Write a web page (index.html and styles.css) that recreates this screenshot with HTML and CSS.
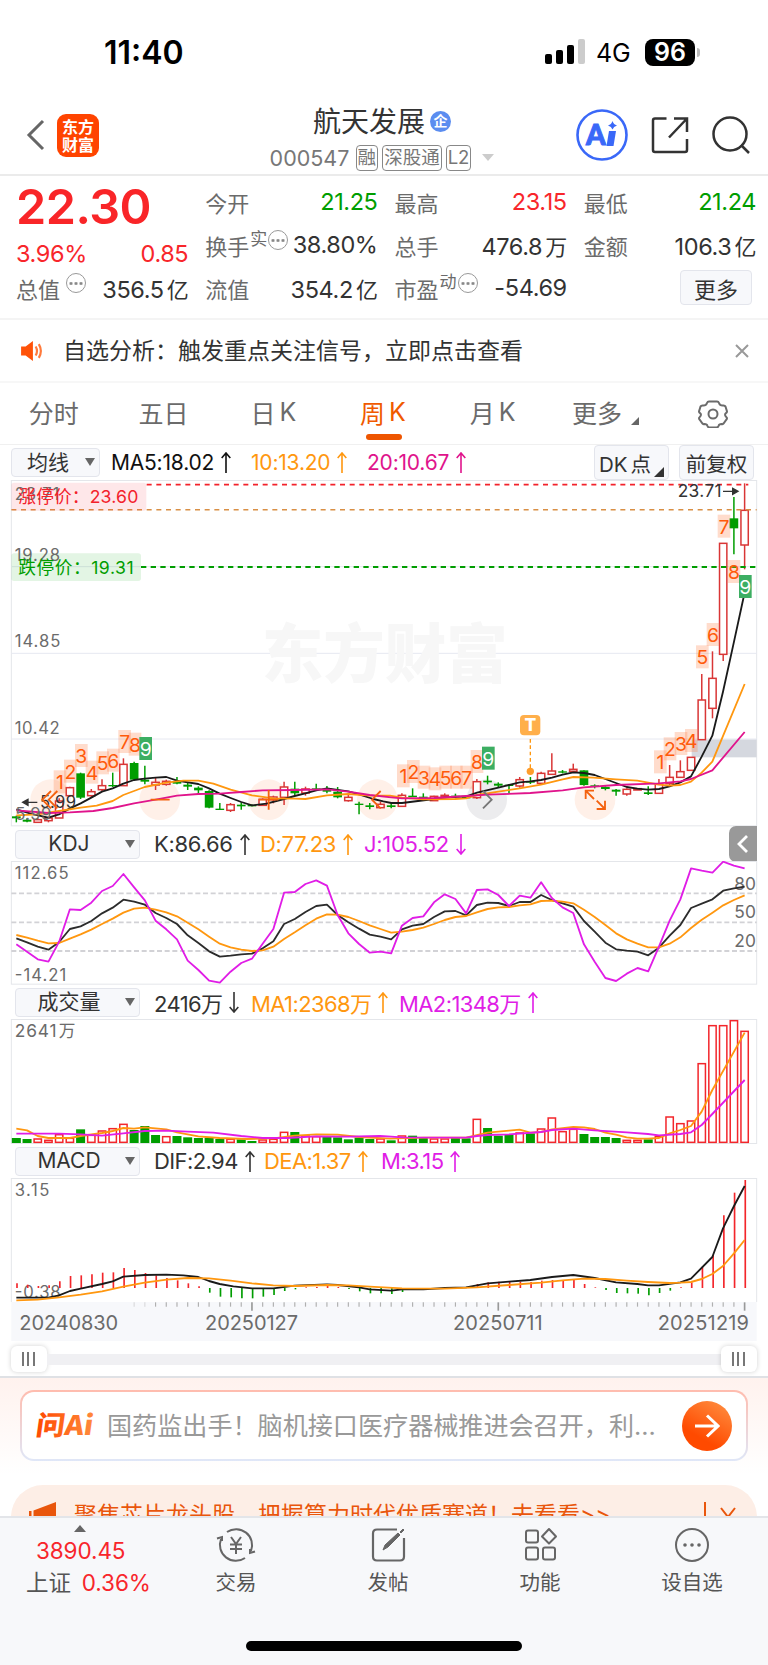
FILE: index.html
```html
<!DOCTYPE html>
<html lang="zh-CN">
<head>
  <meta charset="UTF-8">
  <title>航天发展 000547</title>
  <meta name="viewport" content="width=device-width, initial-scale=1">
  <link rel="stylesheet" href="styles.css">
</head>
<body>

<div class="status">
  <span class="time">11:40</span>
  <svg class="signal" width="40" height="26" viewBox="0 0 40 26">
    <rect x="0" y="15" width="7" height="10" rx="2"/>
    <rect x="11" y="11" width="7" height="14" rx="2"/>
    <rect x="22" y="6" width="7" height="19" rx="2"/>
    <rect x="33" y="0" width="7" height="25" rx="2" fill="#ccc"/>
  </svg>
  <span class="net">4G</span>
  <span class="battery">96</span>
  <span class="battery-tip"></span>
</div>

<header class="header">
  <div class="left">
    <svg width="19" height="32" viewBox="0 0 19 32"><path d="M17 2L3 16l14 14" fill="none" stroke="#666" stroke-width="3"/></svg>
    <div class="logo"><span>东方</span><span>财富</span></div>
  </div>
  <div class="center">
    <div class="title">航天发展<span class="qi">企</span></div>
    <div class="code"><span class="num">000547</span><b>融</b><b>深股通</b><b>L2</b><i class="caret"></i></div>
  </div>
  <div class="right">
    <svg width="52" height="52" viewBox="0 0 52 52">
      <circle cx="26" cy="26" r="24.5" fill="#fff" stroke="#3a68f8" stroke-width="2.6"/>
      <text x="10" y="36" class="ai-a">A</text>
      <path d="M33 22h7l-2.500 15h-7z" fill="#3a68f8"/>
      <path d="M36.500 12q1 3.500 4.500 4.500-3.500 1-4.500 4-1-3-4.500-4 3.500-1 4.500-4.500z" fill="#3a68f8"/>
    </svg>
    <svg width="38" height="38" viewBox="0 0 38 38" fill="none" stroke="#333" stroke-width="2.500">
      <path d="M15.500 2.500H4Q2 2.500 2 4.500V34q0 2 2 2h30q2 0 2-2V23M23 2.500h13V16M36 2.500L18 21.500"/>
    </svg>
    <svg width="38" height="38" viewBox="0 0 38 38" fill="none" stroke="#333" stroke-width="2.500">
      <circle cx="18" cy="18" r="16.500"/><path d="M29 29l8 8"/>
    </svg>
  </div>
</header>

<section class="quote">
  <div class="col first">
    <div class="price">22.30</div>
    <div class="row chg red"><span>3.96%</span><span>0.85</span></div>
    <div class="row"><label>总值<i class="more-dot"></i></label><span>356.5<em>亿</em></span></div>
  </div>
  <div class="col">
    <div class="row"><label>今开</label><span class="green">21.25</span></div>
    <div class="row"><label>换手<sup>实</sup><i class="more-dot tight"></i></label><span>38.80%</span></div>
    <div class="row"><label>流值</label><span>354.2<em>亿</em></span></div>
  </div>
  <div class="col">
    <div class="row"><label>最高</label><span class="red">23.15</span></div>
    <div class="row"><label>总手</label><span>476.8<em>万</em></span></div>
    <div class="row"><label>市盈<sup>动</sup><i class="more-dot tight"></i></label><span>-54.69</span></div>
  </div>
  <div class="col">
    <div class="row"><label>最低</label><span class="green">21.24</span></div>
    <div class="row"><label>金额</label><span>106.3<em>亿</em></span></div>
    <div class="row"><button class="more-btn">更多</button></div>
  </div>
</section>

<div class="notice">
  <svg width="24" height="20" viewBox="0 0 24 22">
    <path d="M0 6h5l8-6v22l-8-6H0z" fill="#ff5208"/>
    <path d="M16 6q3 5 0 10M19.500 3.500q4.500 7.500 0 15" fill="none" stroke="#ff7a3c" stroke-width="2.400"/>
  </svg>
  <span>自选分析：触发重点关注信号，立即点击查看</span>
  <svg class="x" width="14" height="14" viewBox="0 0 14 14"><path d="M1 1l12 12M13 1L1 13" stroke="#999" stroke-width="2"/></svg>
</div>

<nav class="tabs">
  <span>分时</span>
  <span>五日</span>
  <span>日<u>K</u></span>
  <span class="on">周<u>K</u></span>
  <span>月<u>K</u></span>
  <span>更多<i class="corner"></i></span>
  <span class="gear"><svg width="30" height="28" viewBox="-15 -14 30 28" fill="none" stroke="#6b6b6b" stroke-width="2">
    <path d="M-4-12.500h8q1.500 0 2 1.500 1 3 4.500 2.500 1.500 0 2 1l1.500 5q0 1-1 1.500-1.500 1-.500 3l1.500 2q0 1-.500 1.500l-3 4q-1 1-2 .5-2.500 0-3 2-.500 1.500-2 1.500h-7q-1.500 0-2-1.500-.500-2-3-2-1 .5-2-.500l-3-4q-.500-.500-.500-1.500l1.500-2q1-2-.500-3-1-.500-1-1.500l1.500-5q.5-1 2-1 3.500.5 4.500-2.500.5-1.500 2-1.500z"/>
    <circle r="4.500"/></svg></span>
</nav>

<div class="ma-row">
  <div class="select small">均线<i></i></div>
  <span class="lg" style="width:140px">MA5:18.02<svg class="arr"><use href="#up"/></svg></span>
  <span class="lg orange" style="width:116px">10:13.20<svg class="arr"><use href="#up"/></svg></span>
  <span class="lg pink">20:10.67<svg class="arr"><use href="#up"/></svg></span>
  <div class="btns"><button class="dk">DK<em>点</em><i class="corner"></i></button><button>前复权</button></div>
</div>
<svg id="kline" class="chart" viewBox="0 15 2304 1041" height="347"></svg>

<div class="sub-row">
  <div class="select">KDJ<i></i></div>
  <span class="lg" style="width:106px">K:86.66<svg class="arr"><use href="#up"/></svg></span>
  <span class="lg orange" style="width:104px">D:77.23<svg class="arr"><use href="#up"/></svg></span>
  <span class="lg purple">J:105.52<svg class="arr"><use href="#down"/></svg></span>
  <div class="fold"><svg width="12" height="18" viewBox="0 0 12 18"><path d="M10 1L2 9l8 8" fill="none" stroke="#fff" stroke-width="2.800"/></svg></div>
</div>
<svg id="kdj" class="chart" viewBox="0 123 2304 372" height="124"></svg>

<div class="sub-row">
  <div class="select">成交量<i></i></div>
  <span class="lg tight" style="width:97px">2416万<svg class="arr"><use href="#down"/></svg></span>
  <span class="lg tight orange" style="width:148px">MA1:2368万<svg class="arr"><use href="#up"/></svg></span>
  <span class="lg tight purple">MA2:1348万<svg class="arr"><use href="#up"/></svg></span>
</div>
<svg id="vol" class="chart" viewBox="0 27 2304 375" height="125"></svg>

<div class="sub-row">
  <div class="select">MACD<i></i></div>
  <span class="lg tight" style="width:110px">DIF:2.94<svg class="arr"><use href="#up"/></svg></span>
  <span class="lg tight orange" style="width:117px">DEA:1.37<svg class="arr"><use href="#up"/></svg></span>
  <span class="lg tight purple">M:3.15<svg class="arr"><use href="#up"/></svg></span>
</div>
<svg id="macd" class="chart" viewBox="0 504 2304 492" height="164"></svg>

<div class="slider">
  <div class="handle"><i></i><i></i><i></i></div>
  <div class="track"></div>
  <div class="handle"><i></i><i></i><i></i></div>
</div>

<section class="feed">
  <div class="ask">
    <svg class="ask-svg" width="60" height="40" viewBox="0 0 60 40">
      <defs><linearGradient id="g1"><stop offset="0" stop-color="#ff4a00"/><stop offset="1" stop-color="#ff8a3c"/></linearGradient></defs>
      <text x="5" y="29" class="ask-logo" textLength="57" lengthAdjust="spacingAndGlyphs" transform="skewX(-8)" fill="url(#g1)">问Ai</text>
    </svg>
    <span class="q">国药监出手！脑机接口医疗器械推进会召开，利...</span>
    <span class="go"><svg width="26" height="24" viewBox="0 0 26 24"><path d="M1 12h22M13 1.500L24 12 13 22.500" fill="none" stroke="#fff" stroke-width="3"/></svg></span>
  </div>
  <div class="promo">
    <svg width="28" height="30" viewBox="0 0 28 30"><path d="M0 9h2.500v21H0zM4.500 8.500L27 0v30H4.500z" fill="#e9560c"/></svg>
    <span>聚焦芯片龙头股，把握算力时代优质赛道！去看看&gt;&gt;</span>
    <i class="bar"></i>
    <svg class="x" width="16" height="20" viewBox="0 0 16 20"><path d="M1 1l14 18M15 1L1 19" stroke="#e9560c" stroke-width="2"/></svg>
  </div>
</section>

<footer class="bottom">
  <div class="index">
    <i class="tri"></i>
    <div class="red">3890.45</div>
    <div class="name">上证<span class="red">0.36%</span></div>
  </div>
  <div class="item">
    <svg width="40" height="36" viewBox="-20 -18 40 36" fill="none" stroke="#666" stroke-width="2">
      <path d="M-9-13A16 16 0 0 1 15 6M9 13A16 16 0 0 1-15-6M19 6.500l-5 1.500 0-4M-19-6.500l5-1.500 0 4"/>
      <path d="M-5-8L0-1l5-7M0-1V9M-6-.500H6M-6 4H6"/>
    </svg>交易
  </div>
  <div class="item">
    <svg width="40" height="36" viewBox="-20 -18 40 36" fill="none" stroke="#666" stroke-width="2.200">
      <path d="M9-15.500h-20q-4 0-4 4v23q0 4 4 4h23q4 0 4-4V-7"/>
      <path d="M-5 5L-3 0 10-12l2 2L0 2zM12-13l3-3 1 1-3 3z" fill="#666" stroke-width="1"/>
    </svg>发帖
  </div>
  <div class="item">
    <svg width="40" height="36" viewBox="-20 -18 40 36" fill="none" stroke="#666" stroke-width="2">
      <rect x="-14" y="-14.500" width="12" height="12" rx="2"/><rect x="-14" y="2.500" width="12" height="12" rx="2"/><rect x="3" y="2.500" width="12" height="12" rx="2"/>
      <path d="M9-16l7 7.500-7 7-7-7z" stroke-linejoin="round"/>
    </svg>功能
  </div>
  <div class="item">
    <svg width="40" height="36" viewBox="-20 -18 40 36" fill="none" stroke="#666" stroke-width="2">
      <circle r="16"/><g fill="#666" stroke="none"><circle cx="-7" r="1.800"/><circle r="1.800"/><circle cx="7" r="1.800"/></g>
    </svg>设自选
  </div>
  <div class="home"></div>
</footer>

<svg width="0" height="0" class="defs">
  <symbol id="up" viewBox="0 0 10 21"><path d="M5 21V1M.700 6L5 1l4.300 5" fill="none" stroke="currentColor" stroke-width="1.600"/></symbol>
  <symbol id="down" viewBox="0 0 10 21"><path d="M5 0v20M.700 15L5 20l4.300-5" fill="none" stroke="currentColor" stroke-width="1.600"/></symbol>
</svg>

<script src="charts.js"></script>
</body>
</html>
```
FILE: styles.css
```css
* {
  box-sizing: border-box;
}
body {
  margin: 0;
  width: 768px;
  height: 1665px;
  overflow: hidden;
  background: #fff;
  color: #333;
  font-family: Inter, "Noto Sans CJK SC", sans-serif;
  display: flex;
  flex-direction: column;
}
i, em {
  font-style: normal;
}
button {
  font-family: inherit;
  color: #333;
  background: #f7f8fb;
  border: 1.5px solid #e3e5ec;
  border-radius: 4px;
  padding: 0;
}
.red { color: #f8262b; }
.green { color: #009d00; }
.orange { color: #ff970f; }
.pink { color: #e0148c; }
.purple { color: #e01de6; }
.defs { display: none; }

/* status bar */
.status {
  height: 84px;
  flex: none;
  display: flex;
  align-items: center;
  padding: 20px 67px 0 104px;
  color: #000;
}
.time {
  font-size: 32px;
  font-weight: 600;
  width: 441px;
}
.net {
  font-size: 25px;
  margin-left: 11px;
  width: 49px;
  letter-spacing: -0.2px;
  padding-top: 2px;
}
.battery {
  width: 50px;
  height: 27px;
  border-radius: 8px;
  background: #000;
  color: #fff;
  font-size: 25px;
  font-weight: 600;
  line-height: 27px;
  text-align: center;
}
.battery-tip {
  width: 3px;
  height: 9px;
  margin-left: 2px;
  border-radius: 0 4px 4px 0;
  background: #bbb;
}

/* header */
.header {
  height: 92px;
  flex: none;
  display: grid;
  grid-template-columns: 192px 1fr 192px;
  align-items: center;
  border-bottom: 2px solid #ebebeb;
}
.left {
  display: flex;
  align-items: center;
  gap: 12px;
  padding: 12px 0 0 26px;
}
.logo {
  width: 42px;
  height: 43px;
  border-radius: 9px;
  background: #ff4400;
  color: #fff;
  font: 700 16px/18px "Noto Sans CJK SC", sans-serif;
  text-align: center;
  padding-top: 3px;
}
.logo span { display: block; }
.center {
  text-align: center;
  padding: 13px 4px 0 0;
}
.title {
  font-size: 28px;
  line-height: 36px;
  display: flex;
  justify-content: center;
  align-items: center;
  gap: 5px;
  margin-top: 3px;
}
.qi {
  width: 21px;
  height: 21px;
  border-radius: 50%;
  background: #5b8df0;
  color: #fff;
  font-size: 14px;
  font-weight: 700;
  line-height: 20px;
}
.code {
  display: flex;
  justify-content: center;
  align-items: center;
  font-size: 21.5px;
  color: #777;
  gap: 4px;
  margin-top: 5px;
}
.code .num {
  width: 82px;
  text-align: left;
}
.code b {
  font-weight: 400;
  font-size: 18.5px;
  line-height: 23px;
  height: 26px;
  border: 1.5px solid #888;
  border-radius: 4px;
  padding: 0 1px;
}
.caret {
  border: 6px solid transparent;
  border-top: 7px solid #ccc;
  border-bottom: 0;
  margin-left: 7px;
}
.right {
  display: flex;
  justify-content: flex-end;
  align-items: center;
  gap: 23px;
  padding: 11px 18px 0 0;
}
.ai-a {
  font: 900 28px "Lato", sans-serif;
  fill: #3a68f8;
  stroke: #3a68f8;
  stroke-width: 1;
}

/* quote */
.quote {
  height: 144px;
  flex: none;
  display: grid;
  grid-template-columns: repeat(4, 1fr);
  gap: 17px;
  padding: 4px 12px 0 16px;
  border-bottom: 2px solid #f4f4f4;
}
.row {
  height: 43px;
  display: flex;
  align-items: center;
  justify-content: space-between;
  font-size: 23.5px;
  letter-spacing: -0.4px;
  white-space: nowrap;
}
.row em {
  margin-left: 3px;
  font-size: 22px;
}
.row label {
  color: #6b6b6b;
  font-size: 22px;
  letter-spacing: 0;
  display: flex;
  align-items: center;
}
.price {
  font-size: 48.5px;
  font-weight: 600;
  letter-spacing: -0.5px;
  line-height: 50px;
  height: 46px;
  margin-top: 2px;
  color: #f92528;
}
.chg {
  height: 38px;
  padding-top: 12px;
}
sup {
  font-size: 17px;
  line-height: 20px;
  align-self: flex-start;
  margin-left: 1px;
}
.more-dot {
  width: 20px;
  height: 20px;
  margin: -9px 0 0 6px;
  border: 1.5px solid #999;
  border-radius: 50%;
  background: radial-gradient(circle, #888 1.3px, transparent 1.6px) center / 5px 17px repeat-x content-box;
  padding: 0 1px;
}
.more-dot.tight { margin-left: 1px; }
.more-btn {
  width: 72px;
  height: 35px;
  margin: 0 4px 0 auto;
  font-size: 22px;
}

/* notice */
.notice {
  height: 63px;
  flex: none;
  display: flex;
  align-items: center;
  padding: 0 19px 0 20px;
  font-size: 23px;
  border-bottom: 2px solid #f7f7f7;
}
.notice span {
  margin-left: 19px;
  padding-bottom: 3px;
}
.x { margin-left: auto; }

/* tabs */
.tabs {
  height: 62px;
  flex: none;
  display: grid;
  grid-template-columns: repeat(7, 1fr);
  border-bottom: 1px solid #f0f0f0;
}
.tabs span {
  position: relative;
  display: flex;
  align-items: center;
  justify-content: center;
  font-size: 25px;
  color: #6b6b6b;
  padding: 0 2px 3px 0;
}
.tabs .gear { padding: 0; }
.tabs u {
  text-decoration: none;
  margin-left: 4px;
}
.tabs .on { color: #f05a00; }
.tabs .on::after {
  content: "";
  position: absolute;
  left: 37px;
  bottom: 4px;
  width: 36px;
  height: 6px;
  border-radius: 3px;
  background: #ee5500;
}
.corner {
  border: 4px solid #666;
  border-top-color: transparent;
  border-left-color: transparent;
  margin: 18px -6px 0 9px;
}

/* indicator rows */
.ma-row, .sub-row {
  flex: none;
  display: flex;
  align-items: center;
}
.ma-row {
  height: 35px;
  padding-left: 11px;
  color: #111;
}
.sub-row {
  height: 34px;
  padding-left: 15px;
}
.select {
  position: relative;
  width: 125px;
  height: 29px;
  margin-right: 14px;
  padding-right: 17px;
  border: 1.5px solid #e3e5ec;
  border-radius: 4px;
  background: #f7f8fb;
  font-size: 21px;
  line-height: 26px;
  color: #333;
  display: flex;
  align-items: center;
  justify-content: center;
}
.select i {
  position: absolute;
  right: 4px;
  top: 9px;
  border: 5px solid transparent;
  border-top: 8px solid #666;
  border-bottom: 0;
}
.select.small {
  width: 89px;
  margin-right: 11px;
  padding-right: 15px;
}
.lg {
  flex: none;
  font-size: 22px;
  letter-spacing: -0.3px;
  white-space: nowrap;
  display: flex;
  align-items: center;
}
.lg.tight { letter-spacing: -0.6px; }
.ma-row .lg {
  font-size: 21px;
  letter-spacing: -0.2px;
}
.arr {
  width: 10px;
  height: 21px;
  margin-left: 7px;
}
.btns {
  margin-left: auto;
  margin-right: 14px;
  display: flex;
  gap: 10px;
}
.btns button {
  width: 75px;
  height: 35px;
  font-size: 20.5px;
}
.btns .dk {
  position: relative;
  text-align: left;
  padding-left: 4px;
}
.dk em { margin-left: 3px; }
.dk .corner {
  position: absolute;
  right: 4px;
  bottom: 2px;
  margin: 0;
  border-width: 5px;
  border-right-color: #333;
  border-bottom-color: #333;
}
.fold {
  margin-left: auto;
  margin-right: 11px;
  width: 28px;
  height: 36px;
  border-radius: 7px 0 0 7px;
  background: #999;
  display: flex;
  align-items: center;
  justify-content: center;
}
.chart {
  display: block;
  width: 768px;
  flex: none;
  font-family: Inter, "Noto Sans CJK SC", sans-serif;
}

/* range slider */
.slider {
  height: 34px;
  flex: none;
  display: flex;
  align-items: center;
  padding: 0 11px;
}
.track {
  flex: 1;
  height: 11px;
  background: #f0f0f3;
}
.handle {
  width: 36px;
  height: 26px;
  border-radius: 6px;
  background: #fff;
  box-shadow: 0 0 5px rgba(0,0,0,0.18);
  display: flex;
  align-items: center;
  justify-content: center;
  gap: 3.500px;
  padding-right: 2px;
}
.handle i {
  width: 2px;
  height: 14px;
  background: #777;
}

/* feed */
.feed {
  height: 140px;
  flex: none;
  overflow: hidden;
  border-top: 2px solid #dfe1e5;
  background: linear-gradient(#fff2ee, #fff 70%);
}
.ask {
  height: 71px;
  margin: 12px 20px 24px;
  border: 2px solid transparent;
  border-radius: 14px;
  background: linear-gradient(#fff, #fff) padding-box, linear-gradient(#ffbcae, #dfe7f8) border-box;
  display: flex;
  align-items: center;
  padding: 0 14px 0 12px;
}
.ask-svg { overflow: visible; }
.ask-logo {
  font: 900 27px "Noto Sans CJK SC", sans-serif;
}
.q {
  font-size: 25.100px;
  color: #999;
  margin-left: 13px;
  padding-bottom: 3px;
  white-space: nowrap;
}
.go {
  flex: none;
  width: 50px;
  height: 50px;
  margin-left: auto;
  border-radius: 50%;
  background: linear-gradient(30deg, #ff4a00 30%, #ff9345);
  display: flex;
  align-items: center;
  justify-content: center;
}
.promo {
  height: 64px;
  margin: 0 11px;
  border-radius: 32px;
  background: #fdeee6;
  color: #e9560c;
  font-size: 23px;
  display: flex;
  align-items: center;
  padding: 0 21px 0 18px;
}
.promo span {
  margin-left: 17px;
  padding-bottom: 9px;
}
.promo .bar {
  width: 2px;
  height: 30px;
  background: #e9560c;
  margin-left: auto;
}
.promo .x { margin-left: 14px; }

/* bottom bar */
.bottom {
  flex: 1;
  position: relative;
  display: flex;
  background: #f7f8fa;
  border-top: 2px solid #e3e5e9;
  color: #555;
}
.index {
  width: 160px;
  font-size: 22.500px;
  line-height: 32px;
  letter-spacing: -0.1px;
  padding: 7px 0 0 36px;
}
.index .tri {
  display: block;
  width: 0;
  margin: 0 0 3px 38px;
  border: 6px solid transparent;
  border-top: 0;
  border-bottom: 7px solid #666;
}
.index .name { margin-left: -10px; }
.index .name span { margin-left: 11px; }
.item {
  width: 152px;
  display: flex;
  flex-direction: column;
  align-items: center;
  font-size: 20.5px;
  line-height: 30px;
  padding-top: 9px;
}
.item svg { margin-bottom: 5px; }
.home {
  position: absolute;
  left: 246px;
  bottom: 14px;
  width: 276px;
  height: 10px;
  border-radius: 5px;
  background: #000;
}
```
FILE: charts.js
```js
// Charts are drawn in 3x units (2304 units = 768px wide)
const X0 = 49, STEP = 32.13, HALF = 1140;
const RED = '#d93636', GREEN = '#009d00', ORANGE = '#ff970f', PINK = '#e0148c', PURPLE = '#e01de6', BLACK = '#1a1a1a';
const cx = i => X0 + STEP * i;

const rect = (x, y, w, h, a) => `<rect x="${x}" y="${y}" width="${w}" height="${h}" ${a}/>`;
const seg = (x1, y1, x2, y2, c, w = 3, extra = '') => `<line x1="${x1}" y1="${y1}" x2="${x2}" y2="${y2}" stroke="${c}" stroke-width="${w}" ${extra}/>`;
const text = (x, y, s, size, c, len, extra = '') => `<text x="${x}" y="${y}" font-size="${size}" fill="${c}" ${len ? `textLength="${len}"` : ''} ${extra}>${s}</text>`;
const line = (pts, c) => `<polyline points="${pts}" fill="none" stroke="${c}" stroke-width="5.5" stroke-linejoin="round"/>`;
// second half of a curve is stored relative to the middle of the panel
const curve = (a, b, c) => {
  const right = b.split(' ').map(p => { const [x, y] = p.split(','); return (+x + HALF) + ',' + y; });
  return line(a + ' ' + right.join(' '), c);
};
const series = (ys, c) => line(ys.map((y, i) => cx(i) + ',' + y).join(' '), c);
const frame = (y, h) => rect(34, y, 2236, h, 'fill="none" stroke="#e4e6ea" stroke-width="3"');

// type, high, body top, body bottom, low
const candles = `d 1022 1024 1030 1042|d 1030 1034 1040 1042|u 1030 1034 1042 1044|u 1026 1029 1037 1042|u 970 978 1029 1029
u 935 938 962 965|d 893 895 968 972|u 942 950 962 968|u 913 932 944 948|d 893 930 934 936
u 850 868 932 932|d 860 864 914 916|d 872 914 920 928|u 908 922 930 945|u 914 919 928 932
d 906 918 926 928|d 922 929 935 945|d 934 938 946 960|d 946 948 998 1000|d 984 1001 1004 1004
u 984 989 1006 1011|d 982 989 994 1004|d 988 990 993 994|u 970 973 991 991|u 962 966 974 985
u 920 936 967 990|d 920 941 955 962|u 935 942 954 962|d 926 940 943 944|d 933 942 950 955
d 936 950 967 970|u 960 967 977 980|d 980 986 990 1018|d 984 991 996 1003|u 980 988 998 1000
d 985 991 996 1000|u 955 961 994 994|d 940 962 966 966|d 955 965 969 972|u 962 964 977 977
u 955 961 965 970|d 956 962 966 970|d 960 964 970 972|u 912 920 968 972|d 902 917 922 928
d 922 926 932 936|d 927 929 932 954|u 906 914 933 938|d 906 918 923 927|u 890 895 925 926
u 835 888 898 898|d 885 889 893 895|u 866 883 889 892|d 886 886 930 932|d 928 931 934 940
d 934 936 942 946|d 942 944 950 962|u 940 943 957 962|u 940 941 944 945|d 934 952 957 960
u 912 928 955 955|u 870 907 926 930|u 856 890 907 907|u 847 847 886 886|u 597 675 794 794
u 529 610 700 730|u 205 205 538 558|d 66 130 160 238|u 25 106 210 283`.split(/[|\n]/).map(s => s.split(' '));

function kline() {
  let s = frame(16.5, 1036);
  s += rect(HALF + 935, 793, 195, 54, 'fill="#d5d8df"');
  [275, 535, 792].forEach(y => s += seg(34, y, 2270, y, '#e6e8f1', 3));
  s += text(785, 605, '东方财富', 190, '#f7f7f7', 738, 'font-weight="900" lengthAdjust="spacingAndGlyphs"');

  // round tool buttons
  [152, 479, 806, 1132, 1460, 1785].forEach((x, i) => s += `<circle cx="${x}" cy="974" r="61" fill="${i == 4 ? '#ececee' : '#fff0e8'}"/>`);

  candles.forEach(([t, hi, top, bot, lo], i) => {
    const x = cx(i), h = Math.max(bot - top, 4);
    if (t == 'u') {
      s += seg(x, hi, x, top, RED, 4.5) + seg(x, bot, x, lo, RED, 4.5);
      s += rect(x - 11, top, 22, h, `fill="#fff" stroke="${RED}" stroke-width="4.5"`);
    } else {
      s += seg(x, hi, x, lo, GREEN, 4.5) + rect(x - 13, top, 26, h, `fill="${GREEN}"`);
    }
  });

  s += curve('49,1003 100,1018 145,1028 177,1018 210,1000 242,985 274,968 306,950 338,940 370,926 402,915 434,911 467,908 499,906 531,917 595,927 627,940 659,956 692,969 724,981 756,991 800,986 852,972 884,963 916,955 949,946 981,940 1045,949 1077,958 1120,972 1150,979',
    '34,984 66,984 162,972 194,968 260,964 291,953 355,938 419,922 451,919 483,915 516,908 548,899 580,892 612,894 644,900 676,912 708,924 740,936 772,941 804,944 837,942 869,934 901,922 933,904 965,845 997,782 1029,650 1062,500 1091,366', BLACK);
  s += curve('49,1021 113,1018 177,1008 242,998 290,992 338,978 370,960 434,936 499,923 550,917 595,917 640,926 692,944 756,961 820,970 884,971 916,972 981,961 1045,957 1109,962',
    '30,962 66,968 130,973 226,972 258,970 291,960 355,950 419,940 483,929 548,913 580,906 640,908 708,913 772,917 837,929 869,932 901,930 933,920 965,893 997,860 1094,627', ORANGE);
  s += curve('49,1006 145,1014 210,1012 280,1008 338,999 402,985 467,974 531,962 595,957 659,956 724,951 788,946 884,945 981,943 1045,950 1109,960',
    '34,967 66,970 162,969 258,963 323,959 451,954 548,946 612,937 708,930 837,925 901,919 933,912 997,886 1094,771', PINK);

  // limit price lines
  s += seg(440, 29, 2245, 29, '#f3222b', 5, 'stroke-dasharray="15 14"');
  s += seg(34, 104, 2270, 104, '#d98f45', 4.5, 'stroke-dasharray="15 14"');
  s += seg(423, 276, 2270, 276, GREEN, 6.5, 'stroke-dasharray="16 13"');
  s += rect(34, 23, 405, 84, 'rx="8" fill="rgba(250,60,70,0.12)"');
  s += rect(34, 235, 389, 83, 'rx="8" fill="rgba(0,160,10,0.11)"');

  s += text(44, 74, '23.71', 50, '#6b6b6b', 134);
  s += text(44, 257, '19.28', 50, '#6b6b6b', 136);
  s += text(44, 517, '14.85', 50, '#6b6b6b', 137);
  s += text(44, 776, '10.42', 50, '#6b6b6b', 135);
  s += text(55, 84, '涨停价：23.60', 53, '#f3222b', 360);
  s += text(55, 296, '跌停价：19.31', 53, GREEN, 346);
  s += text(46, 1035, '5.99', 50, '#6b6b6b', 108);
  s += text(120, 1000, '5.99', 50, '#333', 108);
  s += `<path d="M112 982H70M84 973L68 982l16 9z" fill="#333" stroke="#333" stroke-width="4"/>`;
  s += text(HALF + 893, 67, '23.71', 52, '#333', 132);
  s += `<path d="M2169 49h40M2198 40l16 9-16 9z" fill="#333" stroke="#333" stroke-width="4"/>`;

  // TD sequence numbers
  const marks = [[180, 886, 1], [211, 854, 2], [244, 807, 3], [276, 857, 4], [308, 829, 5], [340, 821, 6], [374, 765, 7], [405, 773, 8], [437, 786, 9],
    [1210, 868, 1], [1240, 855, 2], [1272, 872, 3], [1305, 877, 4], [1337, 872, 5], [1369, 872, 6], [1400, 872, 7], [1431, 825, 8], [1465, 815, 9],
    [1981, 826, 1], [2010, 787, 2], [2043, 771, 3], [2074, 762, 4], [2107, 511, 5], [2139, 444, 6], [2172, 119, 7], [2202, 255, 8], [2236, 300, 9]];
  marks.forEach(([x, y, n]) => {
    s += rect(x - 19, y, 38, 69, n == 9 ? 'fill="#3cae62"' : 'fill="rgba(255,125,65,0.27)"');
    s += text(x, y + 57, n, 58, n == 9 ? '#fff' : '#ff5a0a', 0, 'text-anchor="middle"');
  });

  // T marker
  s += rect(1560, 720, 61, 61, 'rx="12" fill="#ffaf4b"');
  s += text(1591, 768, 'T', 52, '#fff', 0, 'text-anchor="middle" font-weight="800"');
  s += seg(1591, 792, 1591, 885, ORANGE, 4, 'stroke-dasharray="11 8"');
  s += `<circle cx="1591" cy="889" r="11" fill="#ff9d2b"/>`;

  s += `<g fill="none" stroke="#f4610e" stroke-width="5.5">
    <path d="M153 948l-26 26 26 26M172 948l-26 26 26 26M452 974h57M806 945v59M777 974h58M1142 948l-26 26 26 26"/>
    <path d="M1757 972v-25h25M1757 947l25 25M1815 977v25h-25M1815 1002l-25-25"/>
    <path d="M1449 948l26 26-26 26" stroke="#777"/></g>`;
  return s;
}

function kdj() {
  let s = frame(124.5, 368);
  [220, 307, 393].forEach(y => s += seg(34, y, 2270, y, '#d2d2d6', 5.5, 'stroke-dasharray="15 8"'));
  s += text(44, 176, '112.65', 50, '#6b6b6b', 162);
  s += text(44, 482, '-14.21', 50, '#6b6b6b', 155);
  s += text(2203, 209, '80', 52, '#6b6b6b', 65) + text(2203, 294, '50', 52, '#6b6b6b', 65) + text(2203, 381, '20', 52, '#6b6b6b', 65);
  s += series([355,367,380,389,366,327,319,303,280,263,239,245,254,279,294,312,346,369,394,410,407,403,401,385,364,312,297,276,258,254,285,307,326,344,350,358,328,317,312,291,274,273,286,255,248,249,258,246,246,225,240,250,260,303,335,368,388,392,395,406,383,347,315,264,251,238,212,205,200], '#2c2c2c');
  s += series([345,353,362,370,369,356,343,329,312,296,278,266,263,269,277,289,308,328,350,371,382,389,393,391,380,357,337,316,296,283,284,291,303,316,327,338,335,330,323,312,300,291,288,277,267,262,261,256,253,243,242,245,250,269,291,315,340,358,371,382,382,371,352,324,299,278,256,240,226], ORANGE);
  s += series([373,395,418,425,365,268,270,248,213,198,162,202,241,302,328,358,422,450,482,488,455,429,416,371,327,218,216,192,181,197,285,340,372,398,395,400,317,294,289,247,223,237,280,210,208,225,258,227,233,187,234,262,279,373,425,474,483,461,444,454,380,302,238,145,152,158,125,137,145], PURPLE);
  return s;
}

function vol() {
  const bars = 'd384 d387 u387 u391 u374 u385 d358 u376 u363 u356 u343 d360 d348 d375 u380 d378 d382 d384 d383 d387 u388 d388 d393 u390 u388 u367 d366 u378 u380 d381 d382 d388 d383 d387 u387 d391 u378 d377 d383 u387 u387 d384 d385 u328 d354 d377 d373 u369 d370 u357 u324 u365 u358 d372 d381 d381 d384 u391 u391 d388 u379 u321 u341 u333 u161 u47 u47 u32 u64'.split(' ');
  let s = frame(28.5, 372);
  s += text(44, 82, '2641', 52, '#6b6b6b', 126) + text(176, 82, '万', 50, '#6b6b6b');
  bars.forEach((b, i) => {
    const y = +b.slice(1), x = cx(i);
    if (b[0] == 'u') s += rect(x - 11, y, 22, 397 - y, 'fill="#fff" stroke="#f3262b" stroke-width="4.5"');
    else s += rect(x - 13.5, y, 27, 399 - y, `fill="${GREEN}"`);
  });
  s += curve('49,356 81,361 113,378 145,384 210,384 242,378 306,369 338,363 370,354 402,356 434,352 499,358 531,367 595,379 659,384 740,387 820,385 884,377 949,373 1013,374 1077,381',
    '30,386 130,383 258,383 323,368 355,365 387,362 419,359 451,368 483,366 516,358 580,351 612,352 644,357 676,368 708,374 740,382 772,386 804,386 837,384 869,370 901,360 933,348 965,305 997,240 1062,125 1094,68', ORANGE);
  s += curve('49,371 177,371 242,373 306,377 370,370 434,363 499,362 563,365 640,368 724,378 788,384 860,384 949,379 1045,380',
    '0,378 34,380 66,382 258,383 291,378 323,375 387,373 483,366 516,360 580,356 644,361 740,367 804,372 837,376 901,372 933,367 965,345 997,312 1094,210', PURPLE);
  return s;
}

function macd() {
  const m = [820,824,828,826,814,798,796,793,788,787,774,780,789,796,804,811,820,829,848,860,862,865,865,860,855,843,838,832,831,828,831,837,844,850,850,852,846,837,834,834,834,834,834,822,817,815,816,815,816,812,810,813,808,822,832,840,849,850,851,856,849,842,832,817,770,735,616,548,510];
  let s = frame(505.5, 400);
  s += rect(30, 876, 2244, 120, 'fill="#fff"') + rect(34, 876, 2236, 117, 'fill="#f7f8fb"');
  s += text(44, 559, '3.15', 50, '#6b6b6b', 104);
  s += text(44, 864, '-0.38', 50, '#6b6b6b', 138);
  m.forEach((y, i) => s += seg(cx(i) + 2, 834, cx(i) + 2, y, y > 834 ? GREEN : '#f3262b', 5));
  s += curve('49,863 145,863 177,856 210,843 242,836 306,822 338,814 370,800 434,795 499,794 550,796 595,801 627,813 659,822 700,829 756,835 820,835 884,827 981,823 1013,825 1077,832 1109,838',
    '33,842 66,838 130,838 194,834 258,832 323,820 387,815 451,810 516,801 580,795 644,804 708,817 772,822 804,826 837,826 901,817 933,806 997,741 1029,655 1062,588 1094,528', BLACK);
  s += curve('49,871 113,869 177,862 242,854 306,844 370,830 434,818 500,809 563,804 627,805 692,812 756,820 820,826 884,828 981,825 1045,826 1109,830',
    '66,835 194,836 290,832 387,825 483,818 548,811 612,806 676,807 740,812 804,816 869,819 901,818 933,816 965,807 997,792 1029,768 1062,730 1094,690', ORANGE);
  for (let i = 11; i < 69; i++) {
    const big = i == 22 || i == 45 || i == 68;
    s += seg(cx(i), 877, cx(i), big ? 902 : 890, big ? '#999' : '#b0b0b0', big ? 5 : 3.5, i < 13 ? 'opacity="0.4"' : '');
  }
  s += text(58, 960, '20240830', 60, '#6b6b6b', 296) + text(615, 960, '20250127', 60, '#6b6b6b', 279);
  s += text(HALF + 219, 960, '20250711', 60, '#6b6b6b', 269) + text(HALF + 833, 960, '20251219', 60, '#6b6b6b', 274);
  return s;
}

document.getElementById('kline').innerHTML = kline();
document.getElementById('kdj').innerHTML = kdj();
document.getElementById('vol').innerHTML = vol();
document.getElementById('macd').innerHTML = macd();
```
